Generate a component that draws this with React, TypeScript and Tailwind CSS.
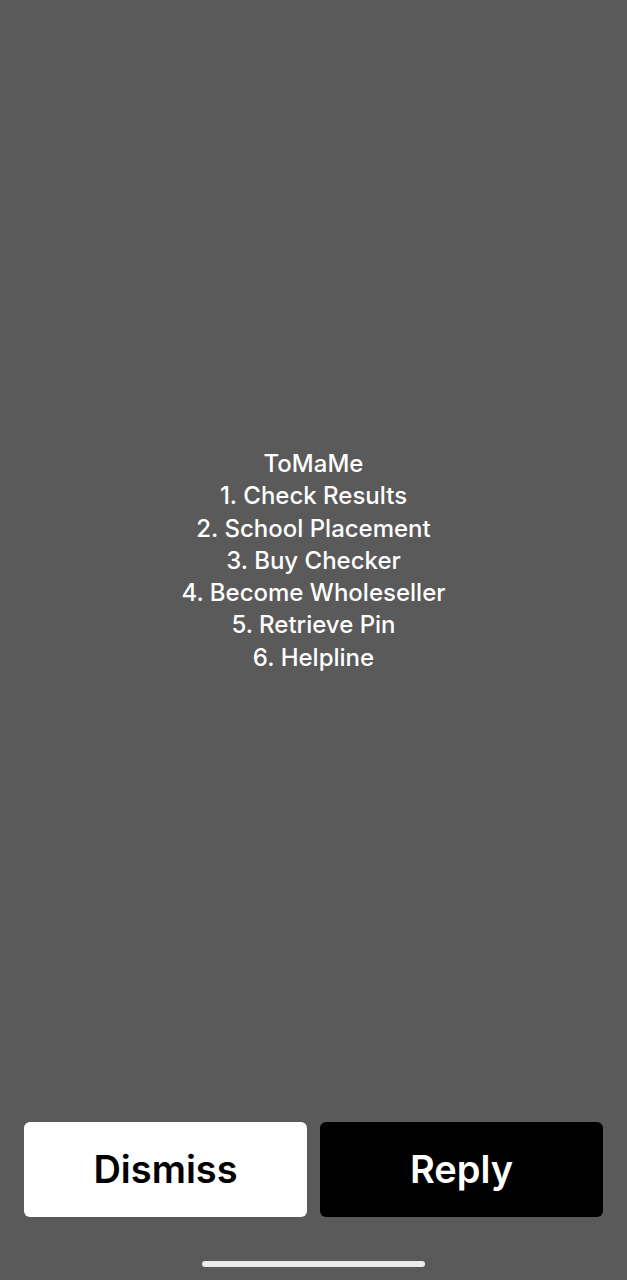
const items = [
  "ToMaMe",
  "1. Check Results",
  "2. School Placement",
  "3. Buy Checker",
  "4. Become Wholeseller",
  "5. Retrieve Pin",
  "6. Helpline",
];

const App = () => {
  return (
    <div
      className="h-[1280px] w-full bg-[#5a5a5a] flex flex-col"
      style={{ fontFamily: "Inter, 'Noto Sans', sans-serif" }}
    >
      <div className="flex-1 flex items-center justify-center">
        <div className="flex flex-col items-center text-white text-[24px] leading-[32.3px] font-medium">
          {items.map((item) => (
            <div key={item}>{item}</div>
          ))}
        </div>
      </div>

      <div className="flex gap-[13px] px-[24px] h-[95px]">
        <button className="flex-1 bg-white rounded-[6px] text-black text-[38px] font-semibold">
          Dismiss
        </button>
        <button className="flex-1 bg-black rounded-[6px] text-white text-[38px] font-semibold">
          Reply
        </button>
      </div>

      <div className="mt-[44px] mb-[13px] mx-auto h-[6px] w-[223px] rounded-full bg-[#ececec]" />
    </div>
  );
};

export default App;
